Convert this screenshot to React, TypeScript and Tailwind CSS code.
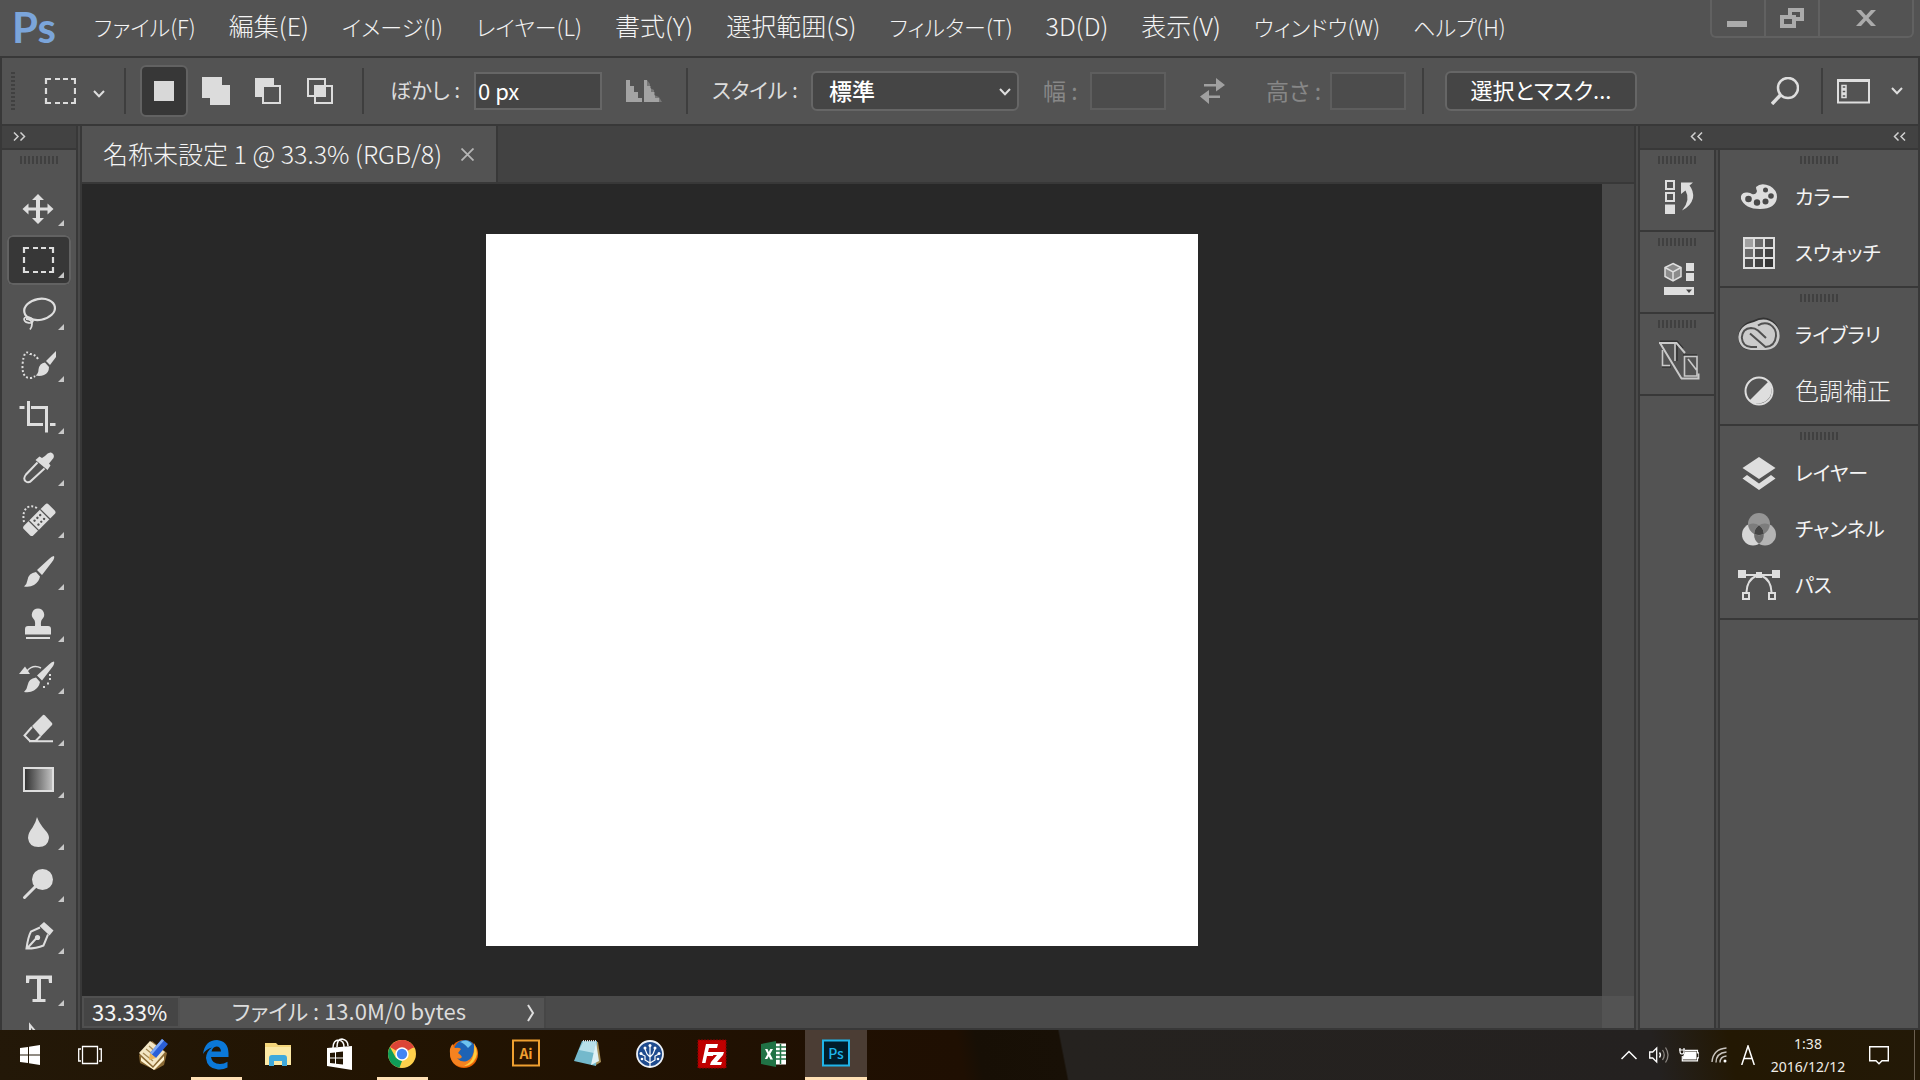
import type { ReactNode } from "react";

const UI =
  "font-['Noto_Sans_CJK_JP','Noto_Sans',sans-serif] [font-feature-settings:'palt']";

type Menu = { label: string; kana?: boolean };

const menus: Menu[] = [
  { label: "ファイル(F)", kana: true },
  { label: "編集(E)" },
  { label: "イメージ(I)", kana: true },
  { label: "レイヤー(L)", kana: true },
  { label: "書式(Y)" },
  { label: "選択範囲(S)" },
  { label: "フィルター(T)", kana: true },
  { label: "3D(D)" },
  { label: "表示(V)" },
  { label: "ウィンドウ(W)", kana: true },
  { label: "ヘルプ(H)", kana: true },
];

const BRUSH = (
  <>
    <path d="M31 0 Q32 2 29 6 L19 19 L14 14 L26 3 Q29 0 31 0Z" />
    <path d="M13 16 L17 20.500 Q16 26 11 29 Q7 31.500 1 30.500 Q4 28 4.500 24 Q5.500 17 13 16Z" />
  </>
);

type Tool = { name: string; kana?: boolean; art: ReactNode };

const tools: Tool[] = [
  {
    name: "移動",
    art: (
      <path d="M15 2l6 6h-4v7.500h7.500V11.500l6 5.500-6 5.500V18.500H17V26h4l-6 6-6-6h4v-7.500H5.500v4L-.5 17l6-5.500v4H13V8H9z" />
    ),
  },
  {
    name: "長方形選択",
    art: (
      <path
        d="M1 9V4h5M10 4h5M18 4h5M26 4h4v5M30 13v6M30 23v5h-4M23 28h-5M15 28h-5M6 28H1v-5M1 19v-6"
        fill="none"
        stroke="currentColor"
        strokeWidth="2.200"
      />
    ),
  },
  {
    name: "なげなわ",
    art: (
      <g fill="none" stroke="currentColor" strokeWidth="2.200">
        <ellipse cx="16.500" cy="13.500" rx="15.500" ry="10.500" transform="rotate(-10 16 13)" />
        <ellipse cx="5.500" cy="24" rx="4.500" ry="2.800" transform="rotate(15 5.500 24)" strokeWidth="1.800" />
        <path d="M3 23q6 0 6 5q0 3-2 5.500" strokeWidth="1.800" />
      </g>
    ),
  },
  {
    name: "クイック選択",
    art: (
      <>
        <path
          d="M15 11Q12 6 7 6Q1-0-.5 17Q-1 30 7 30Q10 30 12 28"
          fill="none"
          stroke="currentColor"
          strokeWidth="2"
          strokeDasharray="2 2"
        />
        <path d="M33 3v6l-6 8-4-4z" />
        <path d="M22 14.500l4 4.500q0 6-5 8-4 1.500-8.500.500 3-2 3-6 1-6.500 6.500-7z" />
      </>
    ),
  },
  {
    name: "切り抜き",
    art: (
      <g fill="none" stroke="currentColor" strokeWidth="3">
        <path d="M-3.500 7.500H1.500M5.500 1v23.500H20M8 7.500h15.500v25M27 24.500h5.500" />
      </g>
    ),
  },
  {
    name: "スポイト",
    art: (
      <>
        <path d="M22 4q3-4 6-3.500Q32 2 30.500 6L26 11.500l1.500 2-3 4.500L12.500 8l4-3.500 2.500 1.500z" />
        <path
          d="M14.500 10.500L3 22.500Q-.5 27 3 29.500Q6 31.500 9 28L21.500 16.500"
          fill="none"
          stroke="currentColor"
          strokeWidth="2"
        />
      </>
    ),
  },
  {
    name: "スポット修復ブラシ",
    art: (
      <>
        <path
          d="M14 4Q9 1 4 3.500Q-1 8 1 18"
          fill="none"
          stroke="currentColor"
          strokeWidth="2"
          strokeDasharray="2 2"
        />
        <g transform="rotate(-45 16.500 16)">
          <rect x="-1" y="9" width="35" height="13.500" rx="2.500" />
          <path d="M8.500 9v14M24.500 9v14" stroke="#535353" strokeWidth="1.300" />
          <g fill="#535353">
            <circle cx="12.500" cy="13" r="1.200" />
            <circle cx="16.500" cy="13" r="1.200" />
            <circle cx="20.500" cy="13" r="1.200" />
            <circle cx="12.500" cy="18.500" r="1.200" />
            <circle cx="16.500" cy="18.500" r="1.200" />
            <circle cx="20.500" cy="18.500" r="1.200" />
          </g>
        </g>
      </>
    ),
  },
  { name: "ブラシ", art: BRUSH },
  {
    name: "コピースタンプ",
    art: (
      <path d="M15 .5a6.200 6.200 0 0 1 4 10.900Q17.500 13 18 18h7q3 0 3 3v5.500H2V21q0-3 3-3h7q.5-5-1-6.600A6.200 6.200 0 0 1 15 .5zM3 29h24v2H3z" />
    ),
  },
  {
    name: "ヒストリーブラシ",
    art: (
      <>
        <g transform="translate(0 1.500)">{BRUSH}</g>
        <path d="M2 6.500l5 7.500H-4z" />
        <path d="M4 11Q10 4 18 8" fill="none" stroke="currentColor" strokeWidth="1.600" />
        <path d="M26 14h2v2h-2zM26 18h2v2h-2zM24 22.500h2v2h-2zM20 26h2v2h-2z" />
      </>
    ),
  },
  {
    name: "消しゴム",
    art: (
      <>
        <path d="M20 3q1-.5 2 .5l7 7.500q.8 1 0 2L18 24.500 9 14z" />
        <path
          d="M9 15L1.500 23.500L7 29h5.500l5-5M6 29.200h24"
          fill="none"
          stroke="currentColor"
          strokeWidth="2"
        />
      </>
    ),
  },
  {
    name: "グラデーション",
    art: (
      <>
        <defs>
          <linearGradient id="toolGradient">
            <stop offset="0" stopColor="#2e2e2e" />
            <stop offset="1" stopColor="#c4c4c4" />
          </linearGradient>
        </defs>
        <rect x="1" y="4" width="29" height="23" fill="url(#toolGradient)" stroke="currentColor" strokeWidth="2" />
      </>
    ),
  },
  {
    name: "ぼかし",
    art: <path d="M14 1Q16 7 22 14Q26 18 26 22Q25 31 15.500 31Q6 31 5 22Q5 17 9.500 11.500Q13 6 14 1Z" />,
  },
  {
    name: "覆い焼き",
    art: (
      <>
        <circle cx="19.500" cy="11.500" r="10.500" />
        <path d="M13 18L1.500 29.500" stroke="currentColor" strokeWidth="3" strokeLinecap="round" />
      </>
    ),
  },
  {
    name: "ペン",
    art: (
      <>
        <path d="M21 2l9.500 8.500-4 5L16.500 6z" />
        <path
          d="M17 7.500L8 11.500Q5 17 3.500 28.500Q14 28.500 20.500 25.500L25 14.500M4 28.500L13.500 18"
          fill="none"
          stroke="currentColor"
          strokeWidth="2"
        />
        <circle cx="14.500" cy="17.500" r="2.600" />
      </>
    ),
  },
  {
    name: "横書き文字",
    art: <path d="M3 3.500h26v7.500h-3l-.5-4H18v20h4.500v3h-13v-3H14V7H6.500L6 11H3z" />,
  },
  {
    name: "パス選択",
    art: <path d="M7 1v24l6-6h9z" fill="none" stroke="currentColor" strokeWidth="2" />,
  },
];

function Grip() {
  return (
    <div className="mx-auto mt-1.5 h-2 w-[38px] shrink-0 bg-[repeating-linear-gradient(90deg,#404040_0_2px,transparent_2px_4px)]" />
  );
}

function Divider() {
  return <div className="w-1.5 shrink-0 border-x-2 border-[#383838] bg-[#4a4a4a]" />;
}

function Sep() {
  return <div className="h-[46px] w-0.5 shrink-0 bg-[#3e3e3e]" />;
}

function Chevron() {
  return (
    <svg className="h-2 w-3 shrink-0" viewBox="0 0 12 8" fill="none" stroke="#dedede" strokeWidth="2">
      <path d="M1 1l5 5.200L11 1" />
    </svg>
  );
}

function DoubleChevron({ flip }: { flip?: boolean }) {
  return (
    <svg
      className="h-[9px] w-[13px]"
      viewBox="0 0 13 9"
      fill="none"
      stroke="#d0d0d0"
      strokeWidth="1.500"
    >
      <path d={flip ? "M1 .5l4 4-4 4M7.500 .5l4 4-4 4" : "M5.500 .5l-4 4 4 4M12 .5l-4 4 4 4"} />
    </svg>
  );
}

function TitleBar() {
  return (
    <header className="flex h-14 shrink-0 items-center bg-[#535353]">
      <div className="ml-3 w-[82px] pb-0.5 font-['Lato',sans-serif] text-[42px] leading-[50px] font-bold text-[#7ba5da]">
        Ps
      </div>
      <nav className="flex items-baseline gap-[33px] pb-1.5">
        {menus.map((m) => (
          <button
            key={m.label}
            className={
              m.kana
                ? "text-[22px] leading-8 font-light whitespace-nowrap text-[#f4f4f4]"
                : "text-[25px] leading-8 font-light whitespace-nowrap text-[#f4f4f4]"
            }
          >
            {m.label}
          </button>
        ))}
      </nav>
      <div className="mr-1.5 ml-auto flex h-[38px] self-start rounded-b-md border-2 border-t-0 border-[#616161]">
        <button aria-label="最小化" className="flex w-[54px] items-center justify-center border-r-2 border-[#616161] text-[#ababab]">
          <svg className="h-6 w-6" viewBox="0 0 24 24" fill="currentColor">
            <path d="M1 15h20v6H1z" />
          </svg>
        </button>
        <button aria-label="元に戻す" className="flex w-[54px] items-center justify-center border-r-2 border-[#616161] text-[#ababab]">
          <svg className="h-6 w-6" viewBox="0 0 24 24" fill="none" stroke="currentColor" strokeWidth="4">
            <path d="M10 9V4h12v9h-6M2 11h12v9H2z" />
          </svg>
        </button>
        <button aria-label="閉じる" className="flex w-[92px] items-center justify-center text-[#ababab]">
          <svg className="h-6 w-6" viewBox="0 0 24 24" fill="currentColor">
            <path d="M2 4h5l5 5.500L17 4h5l-7.500 8L22 20h-5l-5-5.500L7 20H2l7.500-8z" />
          </svg>
        </button>
      </div>
    </header>
  );
}

function OptionsBar() {
  return (
    <section className="flex h-[70px] shrink-0 items-center border-2 border-[#383838] bg-[#535353] text-[21px] text-[#dcdcdc]">
      <div className="ml-[9px] h-[38px] w-1 shrink-0 bg-[repeating-linear-gradient(180deg,#404040_0_2px,transparent_2px_4px)]" />
      <button aria-label="ツールプリセット" className="ml-[29px] flex w-16 shrink-0 items-center justify-between">
        <svg className="h-7 w-8" viewBox="0 0 32 28" fill="none" stroke="currentColor" strokeWidth="2.200">
          <path d="M2 7V2h5M11 2h5M19 2h5M27 2h4v5M31 11v6M31 21v5h-4M24 26h-5M16 26h-5M7 26H2v-5M2 17v-6" />
        </svg>
        <div className="pt-1.5 pr-[3px]">
          <Chevron />
        </div>
      </button>
      <div className="ml-4">
        <Sep />
      </div>
      <div className="ml-3.5 flex shrink-0 gap-1">
        <button aria-label="新規選択" className="flex h-[52px] w-12 items-center justify-center rounded-md border-2 border-[#626262] bg-[#373737]">
          <div className="h-5 w-5 bg-[#d8d8d8]" />
        </button>
        <button aria-label="選択範囲に追加" className="flex h-[52px] w-12 items-center justify-center">
          <svg className="h-7 w-7" viewBox="0 0 28 28" fill="currentColor">
            <path d="M0 0h20v8h8v20H8v-7H0z" />
          </svg>
        </button>
        <button aria-label="一部削除" className="flex h-[52px] w-12 items-center justify-center">
          <svg className="h-7 w-7" viewBox="0 0 28 28" fill="currentColor">
            <path d="M1 1h19v7H8v12H1z" />
            <path d="M9 9h17v17H9z" fill="none" stroke="currentColor" strokeWidth="2" />
          </svg>
        </button>
        <button aria-label="共通範囲" className="flex h-[52px] w-12 items-center justify-center">
          <svg className="h-7 w-7" viewBox="0 0 28 28" fill="none" stroke="currentColor" strokeWidth="2">
            <path d="M2 2h17v17H2z" />
            <path d="M9 9h17v17H9z" />
            <path d="M9 9h10v10H9z" fill="currentColor" />
          </svg>
        </button>
      </div>
      <div className="ml-[18px]">
        <Sep />
      </div>
      <label htmlFor="feather" className="ml-[26px] w-[84px] shrink-0 pb-0.5 whitespace-nowrap">
        ぼかし :
      </label>
      <input
        id="feather"
        defaultValue="0 px"
        className="h-[38px] w-32 min-w-0 border-2 border-[#666] bg-[#454545] px-0.5 pb-0.5 text-[22px] text-white outline-none"
      />
      <svg className="ml-6 h-6 w-9 shrink-0" viewBox="0 0 36 24" aria-hidden="true">
        <path d="M0 1h4v6h4v6h4v6h4v4H0z" fill="#a3a3a3" />
        <path d="M18 1h3v6h4v6h4v6h4v4H18z" fill="#a3a3a3" />
        <path d="M21 1l3 4v4l4 2v5l5 2 3 5h-3v-4h-4v-6h-4V7h-4z" fill="#777" />
      </svg>
      <div className="ml-6">
        <Sep />
      </div>
      <label htmlFor="style" className="ml-6 w-[99px] shrink-0 pb-0.5 whitespace-nowrap">
        スタイル :
      </label>
      <div className="relative w-52 shrink-0">
        <select
          id="style"
          className="h-10 w-full appearance-none rounded-md border-2 border-[#666] bg-[#454545] pb-0.5 pl-4 text-[23px] font-medium text-white outline-none"
        >
          <option>標準</option>
        </select>
        <div className="pointer-events-none absolute top-[17px] right-2">
          <Chevron />
        </div>
      </div>
      <label htmlFor="w" className="ml-6 w-[47px] shrink-0 pb-0.5 text-[23px] whitespace-nowrap text-[#878787]">
        幅 :
      </label>
      <input id="w" disabled className="h-[38px] w-[76px] min-w-0 border-2 border-[#5e5e5e] bg-[#4c4c4c]" />
      <button aria-label="幅と高さを入れ替え" className="ml-8 shrink-0 text-[#a0a0a0]">
        <svg className="h-7 w-7" viewBox="0 0 28 28" fill="currentColor">
          <path d="M6 7h12V1l9 7-9 6.500V9.500H6zM22 18.500v2.500H11v6l-9-7.500L11 13v5.500z" />
        </svg>
      </button>
      <label htmlFor="h" className="ml-10 w-16 shrink-0 pb-0.5 text-[23px] whitespace-nowrap text-[#878787]">
        高さ :
      </label>
      <input id="h" disabled className="h-[38px] w-[76px] min-w-0 border-2 border-[#5e5e5e] bg-[#4c4c4c]" />
      <div className="ml-4">
        <Sep />
      </div>
      <button className="ml-[21px] h-10 w-48 shrink-0 rounded-md border-2 border-[#666] bg-[#454545] pb-1 text-[22px] leading-8 whitespace-nowrap text-white">
        選択とマスク...
      </button>
      <button aria-label="検索" className="ml-auto">
        <svg className="h-7 w-7" viewBox="0 0 28 28" fill="none" stroke="#dedede" strokeWidth="2.500">
          <circle cx="17" cy="11" r="10" />
          <path d="M9.500 18L1 27" strokeWidth="3.500" />
        </svg>
      </button>
      <div className="ml-[22px]">
        <Sep />
      </div>
      <button aria-label="ワークスペース" className="mr-[15px] ml-3.5 flex items-center gap-[21px]">
        <svg className="h-7 w-[33px]" viewBox="0 0 33 28" fill="none" stroke="#dedede" strokeWidth="2">
          <path d="M1 3h31v22.500H1z" />
          <path d="M0 3.500h33" strokeWidth="3" />
          <path d="M5 8.500h4v3H5zM5 13h4v3H5zM5 17.500h4v3H5z" strokeWidth="1.500" />
        </svg>
        <Chevron />
      </button>
    </section>
  );
}

function Toolbox() {
  return (
    <aside className="flex w-[74px] shrink-0 flex-col overflow-hidden bg-[#535353]">
      <div className="flex h-6 shrink-0 items-center border-b-2 border-[#383838] bg-[#424242] pb-0.5 pl-[11px]">
        <button aria-label="パネルを展開">
          <DoubleChevron flip />
        </button>
      </div>
      <Grip />
      <div className="mt-[18px] flex flex-col">
        {tools.map((t, i) => (
          <div key={t.name} className="flex h-[52px] shrink-0 justify-center py-px">
            <button
              aria-label={t.name}
              className={
                i === 1
                  ? "relative flex h-[50px] w-16 items-center justify-center rounded-md bg-[#373737] text-[#dedede] inset-ring-2 inset-ring-[#626262]"
                  : "relative flex h-[50px] w-16 items-center justify-center text-[#dedede]"
              }
            >
              <svg className="h-8 w-8 overflow-visible" viewBox="0 0 32 32" fill="currentColor">
                {t.art}
              </svg>
              <svg className="absolute right-[7px] bottom-[7px] h-1.5 w-1.5" viewBox="0 0 6 6" fill="#c8c8c8">
                <path d="M6 0v6H0z" />
              </svg>
            </button>
          </div>
        ))}
      </div>
    </aside>
  );
}

function Document() {
  return (
    <main className="flex min-w-0 flex-1 flex-col border-b-2 border-[#383838]">
      <div className="flex h-[58px] shrink-0 border-b-2 border-[#383838] bg-[#424242]">
        <div className="flex items-center border-r-2 border-[#383838] bg-[#535353] pr-[22px] pl-[21px]">
          <span className="w-[342px] pb-0.5 text-[25px] leading-8 font-light whitespace-nowrap text-[#f4f4f4]">
            名称未設定 1 @ 33.3% (RGB/8)
          </span>
          <button aria-label="タブを閉じる" className="ml-4">
            <svg className="h-[13px] w-[13px]" viewBox="0 0 13 13" stroke="#b5b5b5" strokeWidth="1.800">
              <path d="M.5 .5l12 12M12.500 .5l-12 12" />
            </svg>
          </button>
        </div>
      </div>
      <div className="flex min-h-0 flex-1">
        <div className="flex flex-1 items-center justify-center bg-[#282828]">
          <div className="aspect-square w-[712px] bg-white" />
        </div>
        <div className="w-8 bg-[#4a4a4a]" />
      </div>
      <div className="flex h-8 shrink-0 bg-[#4a4a4a]">
        <div className="flex w-[98px] items-center border-2 border-[#505050] bg-[#454545]">
          <input
            aria-label="ズーム"
            defaultValue="33.33%"
            className="h-7 w-full bg-transparent pb-0.5 pl-2 text-[22px] text-[#f4f4f4] outline-none"
          />
        </div>
        <div className="flex w-[366px] items-center justify-between border-t-2 border-r-2 border-[#464646] bg-[#535353] pr-[9px] pl-[52px] text-[22px] text-[#dcdcdc]">
          <span className="pb-1.5 leading-7 whitespace-nowrap">ファイル : 13.0M/0 bytes</span>
          <svg className="h-[18px] w-2" viewBox="0 0 8 18" fill="none" stroke="#dedede" strokeWidth="2">
            <path d="M1 1l5 8-5 8" />
          </svg>
        </div>
        <div className="ml-auto w-8 bg-[#535353]" />
      </div>
    </main>
  );
}

const dockIcons: Tool[] = [
  {
    name: "ヒストリー",
    art: (
      <>
        <path d="M7 4h8v8H7zM7 16h8v8H7z" fill="none" stroke="currentColor" strokeWidth="2" />
        <path d="M6 27.500h10V37H6z" />
        <path d="M22 17V5.500h12L30.500 8.500Q35 14 34 21Q32 29 23 33.500Q32 23 26.500 13.500z" />
      </>
    ),
  },
  {
    name: "プロパティ",
    art: (
      <>
        <path d="M14 4.500l8 4v9l-8 4.500-8-4.500v-9z" fill="#8b8b8b" stroke="currentColor" strokeWidth="1.500" />
        <path d="M6 8.500l8 4.500 8-4.500M14 13v9" fill="none" stroke="currentColor" strokeWidth="1.500" />
        <path d="M27 4h8v8h-8zM27 14h8v8h-8z" />
        <path d="M5 28h30v8H5z" />
        <path d="M27 30.500h6l-3 3.500z" fill="#444" />
      </>
    ),
  },
  {
    name: "3D",
    art: (
      <g fill="none">
        <path d="M1 .3h17l6 7M18 3v17M24 14h14M3 26h9" stroke="#333" strokeWidth="1.600" />
        <g stroke="#c9c9c9" strokeWidth="2">
          <path d="M0 2h17.500L26 12M1 2l21.500 35.500M22 37.500h17.500v-5" />
          <path d="M3.500 9v15.500H11M16 3v17M25.500 15.500h12.500v19.500H25.500zM29 18l8.500 11" strokeWidth="1.600" />
        </g>
      </g>
    ),
  },
];

const groups: Tool[][] = [
  [
    {
      name: "カラー",
      kana: true,
      art: (
        <>
          <path d="M18 5Q23-.0 32 4Q39 8 39 15Q38 27 22 27Q7 27 3 17Q2 11 8 10.500Q12 10 14 12Q18 13 19 9Q18 7 18 5Z" />
          <g fill="#4a4a4a">
            <circle cx="10.500" cy="17" r="3.300" />
            <circle cx="19" cy="20.500" r="3.200" />
            <circle cx="27.500" cy="19.500" r="3" />
            <circle cx="33" cy="14" r="2.800" />
            <circle cx="27.500" cy="8" r="2.500" />
          </g>
        </>
      ),
    },
    {
      name: "スウォッチ",
      kana: true,
      art: (
        <>
          <path d="M5-1h32v32H5z" />
          <path d="M7 1h8v8H7z" fill="#a0a0a0" />
          <path d="M17 1h8v8h-8zM7 11h8v8H7z" fill="#6a6a6a" />
          <path d="M27 1h8v8h-8zM17 11h8v8h-8zM7 21h8v8H7z" fill="#4c4c4c" />
          <path d="M27 11h8v8h-8zM17 21h8v8h-8z" fill="#404040" />
          <path d="M27 21h8v8h-8z" fill="#333" />
        </>
      ),
    },
  ],
  [
    {
      name: "ライブラリ",
      kana: true,
      art: (
        <>
          <path d="M15 .5Q29-7 38 4Q43 11 41 20Q37 30 28 30H13Q1 30 0 17Q1 4 15 .5Z" fill="#333" />
          <path d="M16 2Q28-4 37 4.500Q42.500 10 41.500 18Q39 30 27 30H13Q1 29 .3 17Q1.500 5 16 2Z" fill="#cbcbcb" />
          <path
            d="M20 5.500Q26 1.500 32 4.500Q38.500 8.500 38 16Q37 26.500 27.500 27L12 13.500M19 27H13Q4.500 26.500 3.800 17.500Q4.500 8.500 13 8Q17 8 20 10.500L28 18"
            fill="none"
            stroke="#505050"
            strokeWidth="2"
          />
        </>
      ),
    },
    {
      name: "色調補正",
      art: (
        <>
          <circle cx="21" cy="15" r="13.500" fill="none" stroke="currentColor" strokeWidth="2" />
          <path d="M30.500 5.500A13.500 13.500 0 0 1 11.500 24.500z" />
        </>
      ),
    },
  ],
  [
    {
      name: "レイヤー",
      kana: true,
      art: (
        <>
          <path d="M21-1l16.500 11L21 21 4.500 10z" />
          <path d="M9 17l12 8.500L33 17l4.500 3.500L21 32 4.500 20.500z" />
        </>
      ),
    },
    {
      name: "チャンネル",
      kana: true,
      art: (
        <>
          <circle cx="15" cy="20.500" r="11" fill="#d6d6d6" />
          <circle cx="27" cy="20.500" r="11" fill="#b4b4b4" />
          <circle cx="21" cy="10" r="11" fill="#959595" />
          <path d="M21 11.300a11 11 0 0 1 4.800 8.600 11 11 0 0 1-9.600 0A11 11 0 0 1 21 11.300z" fill="#444" />
          <path d="M16.200 20a11 11 0 0 0 4.800 9.700A11 11 0 0 0 25.800 20a11 11 0 0 1-9.600 0z" fill="#6e6e6e" />
          <path d="M10.500 10.800Q16 8 21 11.300Q16.500 14 16.200 20Q10.500 16 10.500 10.800zM31.500 10.800Q26 8 21 11.300Q25.500 14 25.800 20Q31.500 16 31.500 10.800z" fill="#7c7c7c" />
        </>
      ),
    },
    {
      name: "パス",
      kana: true,
      art: (
        <>
          <path d="M0 0h8v8H0zM34 0h8v8h-8zM18 2h6v6h-6z" />
          <path d="M4 5h34M18 6Q9 10 8.500 22M24 6Q33 10 33.500 22M5 23h6v6H5zM31 23h6v6h-6z" fill="none" stroke="currentColor" strokeWidth="2" />
        </>
      ),
    },
  ],
];

function Dock() {
  return (
    <aside className="flex w-[280px] shrink-0 flex-col border-r-2 border-b-2 border-[#383838] bg-[#535353]">
      <div className="flex h-6 shrink-0 items-center justify-between border-b-2 border-[#383838] bg-[#424242] pr-3 pb-0.5 pl-[50px]">
        <button aria-label="アイコンパネルを展開">
          <DoubleChevron />
        </button>
        <button aria-label="パネルを展開">
          <DoubleChevron />
        </button>
      </div>
      <div className="flex min-h-0 flex-1">
        <div className="w-[74px] shrink-0">
          {dockIcons.map((d) => (
            <div key={d.name} className="flex h-[82px] flex-col items-center border-b-2 border-[#383838]">
              <Grip />
              <button aria-label={d.name} className="mt-[13px] pl-1 text-[#dedede]">
                <svg className="h-10 w-10 overflow-visible" viewBox="0 0 40 40" fill="currentColor">
                  {d.art}
                </svg>
              </button>
            </div>
          ))}
        </div>
        <Divider />
        <div className="min-w-0 flex-1">
          {groups.map((g) => (
            <section key={g[0].name} className="flex flex-col border-b-2 border-[#383838] pb-[5px]">
              <Grip />
              <div className="mt-[5px]">
                {g.map((p) => (
                  <button key={p.name} className="flex h-14 w-full items-center gap-[15px] pl-[18px] text-[#dedede]">
                    <svg className="h-[30px] w-[42px] shrink-0 overflow-visible" viewBox="0 0 42 30" fill="currentColor">
                      {p.art}
                    </svg>
                    <span
                      className={
                        p.kana
                          ? "text-[20px] leading-8 whitespace-nowrap text-[#f4f4f4]"
                          : "pb-0.5 text-[24px] leading-8 font-light whitespace-nowrap text-[#f4f4f4]"
                      }
                    >
                      {p.name}
                    </span>
                  </button>
                ))}
              </div>
            </section>
          ))}
        </div>
      </div>
    </aside>
  );
}

type AppEntry = { name: string; state?: "open" | "active"; art: ReactNode };

const apps: AppEntry[] = [
  {
    name: "メモ",
    art: (
      <>
        <path d="M1 17L14 3l15 12-3 12-9 5L2 25z" fill="#8a6a35" />
        <path d="M1 15L12 3l15 11-12 14z" fill="#f3e6c4" />
        <path d="M5 15l10 8M8 11l10 8M11 8l9 8" stroke="#a58a55" strokeWidth="1.300" />
        <path d="M3 19l12 11 11-12v4L16 32 3 23z" fill="#fff3d0" />
        <path d="M24 1l6 5-12 14-6-5z" fill="#2a5fd8" />
        <path d="M24 1l2 1.500-12 14-2-1.500z" fill="#7da8f5" />
        <path d="M12 15l6 5-7 2z" fill="#e9b45c" />
      </>
    ),
  },
  {
    name: "Edge",
    state: "open",
    art: (
      <path
        d="M3 16Q5 2 17 2Q28 3 28.500 15V19H11Q12 26 20 26Q24 26 27.500 23.800V29.500Q23 32 18 31.500Q7 30.500 6 20Q6.500 13 12 9.500Q6 11 3 16ZM11.500 13.500H21Q20.500 8.500 16.500 8.500Q12.500 9 11.500 13.500Z"
        fill="#0b78d8"
      />
    ),
  },
  {
    name: "エクスプローラー",
    art: (
      <>
        <path d="M3 5h11l2 2h13v20H3z" fill="#f5d67b" />
        <path d="M3 9h26v18H3z" fill="#fce9a5" />
        <path d="M7 28v-8q0-3 3-3h12q3 0 3 3v8h-5v-5h-8v5z" fill="#3fa9dc" />
      </>
    ),
  },
  {
    name: "ストア",
    art: (
      <>
        <path d="M3 10l25-2v24L3 28z" fill="#fff" />
        <path d="M9 10Q9 2 15 2Q20 3 20 9M13 9Q13 1 18 1Q24 2 24 8" fill="none" stroke="#fff" strokeWidth="1.500" />
        <path d="M6 15l5-.5v5H6zM12 14.300l7-.8v6h-7zM6 20.500h5v5L6 25zM12 20.500h7v6l-7-.8z" fill="#231604" />
      </>
    ),
  },
  {
    name: "Chrome",
    state: "open",
    art: (
      <>
        <circle cx="16" cy="16" r="14" fill="#ffd04b" />
        <path d="M16 16L3.900 9A14 14 0 0 1 28.100 9z" fill="#db4437" />
        <path d="M16 2a14 14 0 0 1 12.100 7.500H16z" fill="#db4437" />
        <path d="M3.900 9L10 20l6 3-2.500 6.800A14 14 0 0 1 3.900 9z" fill="#0f9d58" />
        <circle cx="16" cy="16" r="6.700" fill="#fff" />
        <circle cx="16" cy="16" r="5.200" fill="#4285f4" />
      </>
    ),
  },
  {
    name: "Firefox",
    art: (
      <>
        <circle cx="16" cy="16" r="14" fill="#e66000" />
        <circle cx="17" cy="13" r="11" fill="#1e63b5" />
        <path d="M12 4q7-4 12 2l-4 4q-4-5-8-6z" fill="#6ec3ee" />
        <path d="M26 5q7 10 0 19Q18 32 8 27Q1 22 2 11q1-4 3-5 0 3 2 4 4-1 6 1l-3 4q3 2 4 4-2 3-5 1 4 5 10 3 8-3 7-18z" fill="#f58220" />
        <path d="M26 6q6 10-1 18-4 4-9 4 8-4 9-10 2-5 1-12z" fill="#ffcb3d" />
      </>
    ),
  },
  {
    name: "Illustrator",
    art: (
      <>
        <rect x="3" y="2.500" width="26" height="25" fill="#2a1500" stroke="#f0a030" strokeWidth="2" />
        <text x="16" y="20.500" textAnchor="middle" fontSize="14" fontWeight="700" fill="#f0a030">
          Ai
        </text>
      </>
    ),
  },
  {
    name: "メモ帳",
    art: (
      <>
        <path d="M10 3l16 1 3 20-5 3z" fill="#a58d55" />
        <path d="M10 3h15l-1 25-22-5z" fill="#74b9cc" />
        <path d="M11 4h13l-2 11-15-3z" fill="#b8e0ea" />
        <path d="M24 4l3 19-8 4z" fill="#dff1f5" />
        <path d="M11 3h14" stroke="#d8d8d8" strokeWidth="2" strokeDasharray="1 1" />
      </>
    ),
  },
  {
    name: "SourceTree",
    art: (
      <>
        <circle cx="16" cy="16" r="13" fill="#1f4b8e" stroke="#eef2f8" strokeWidth="1.800" />
        <path
          d="M16 29V8M16 25l-5-3v-4l-4-2M16 25l5-3v-4l4-2M16 19l-3-3-2-5M16 19l3-3 2-5"
          fill="none"
          stroke="#fff"
          strokeWidth="1.200"
        />
        <g fill="#fff">
          <circle cx="16" cy="7.500" r="1.500" />
          <circle cx="11" cy="10" r="1.500" />
          <circle cx="21" cy="10" r="1.500" />
          <circle cx="7" cy="15.500" r="1.500" />
          <circle cx="25" cy="15.500" r="1.500" />
          <circle cx="8" cy="21" r="1.300" />
          <circle cx="24" cy="21" r="1.300" />
        </g>
      </>
    ),
  },
  {
    name: "FileZilla",
    art: (
      <>
        <rect x="2" y="2" width="28" height="28" fill="#bf0000" stroke="#8e0000" strokeDasharray="2 1" />
        <path d="M6 25L10 6h12l-1 4h-8l-1 4h6l-1 4h-6l-1.500 7zM17 14h11l-1 3-6 7h5l-1 3H14l1-3 6-7h-5z" fill="#fff" />
      </>
    ),
  },
  {
    name: "Excel",
    art: (
      <>
        <path d="M16 5.500h12v21H16z" fill="#fff" />
        <path d="M17 9h11M17 13h11M17 17h11M17 21h11M22.500 6v20" stroke="#207245" strokeWidth="1.500" />
        <path d="M3 6l15-3v26L3 26z" fill="#207245" />
        <path d="M7 11h2.500l1.300 3 1.500-3H15l-2.800 5 2.800 5.500h-2.700l-1.500-3.300L9.300 21H6.800l2.700-5z" fill="#fff" />
      </>
    ),
  },
  {
    name: "Photoshop",
    state: "active",
    art: (
      <>
        <rect x="3" y="2.500" width="26" height="25" fill="#001d2b" stroke="#1fb5ea" strokeWidth="2" />
        <text x="16" y="20.500" textAnchor="middle" fontSize="14" fontWeight="500" fill="#1fb5ea">
          Ps
        </text>
      </>
    ),
  },
];

function Taskbar() {
  return (
    <footer className="flex h-[50px] shrink-0 items-stretch bg-[linear-gradient(79deg,#231808_0%,#221402_20%,#1f0f02_50%,#170f05_51%,#181006_55.300%,#25221f_55.400%,#242120_86%,#231803_90%,#231907_100%)] text-white">
      <button aria-label="スタート" className="flex w-[60px] items-center justify-center">
        <svg className="h-5 w-5" viewBox="0 0 20 20" fill="#fff">
          <path d="M0 3l8-1v7.500H0zM9 1.800L20 0v9.500H9zM0 10.500h8V18l-8-1zM9 10.500h11V20L9 18.200z" />
        </svg>
      </button>
      <button aria-label="タスクビュー" className="flex w-[60px] items-center justify-center">
        <svg className="h-5 w-6" viewBox="0 0 24 20" fill="none" stroke="#fff" strokeWidth="1.300">
          <path d="M4.500 1.500h15v17h-15zM3 4H.7v12H3M21 4h2.300v12H21" />
        </svg>
      </button>
      <div className="ml-[3px] flex">
        {apps.map((a) => (
          <button
            key={a.name}
            aria-label={a.name}
            className={
              a.state === "active"
                ? "flex w-[62px] flex-col items-center justify-between bg-[#4b3d34] pt-2"
                : "flex w-[62px] flex-col items-center justify-between pt-2"
            }
          >
            <svg className="h-8 w-8" viewBox="0 0 32 32">
              {a.art}
            </svg>
            {a.state === "open" && <div className="h-[3px] w-[51px] bg-[#ffe0b4]" />}
            {a.state === "active" && <div className="h-[3px] w-full bg-[#ffe0b4]" />}
          </button>
        ))}
      </div>
      <div className="ml-auto flex items-center">
        <button aria-label="隠れているインジケーター" className="mr-3">
          <svg className="h-2.5 w-4" viewBox="0 0 16 10" fill="none" stroke="#fff" strokeWidth="1.500">
            <path d="M.5 9L8 1.500 15.500 9" />
          </svg>
        </button>
        <button aria-label="音量" className="mr-2.5">
          <svg className="h-5 w-5" viewBox="0 0 20 20" fill="none" stroke="#fff" strokeWidth="1.300">
            <path d="M.7 7h3l4-4v14l-4-4h-3z" />
            <path d="M10.500 7.500q2 2.500 0 5" />
            <path d="M13.500 5q3.500 5 0 10M16.500 2.500q5 7.500 0 15" stroke="#8a8580" />
          </svg>
        </button>
        <button aria-label="バッテリー" className="mr-3">
          <svg className="h-4 w-5" viewBox="0 0 20 16" fill="#fff">
            <path d="M6 4.500h11.500v8H4v-3z" />
            <path d="M6 3.300h12.500v2.500H20v5h-1.500v3H3.300V9M1 1v3.500q0 2.500 2 2.500t2-2.500V1M0 3h6" fill="none" stroke="#fff" strokeWidth="1.200" />
          </svg>
        </button>
        <button aria-label="ネットワーク" className="mr-3.5">
          <svg className="h-4 w-4" viewBox="0 0 16 16" fill="none" stroke="#fff" strokeWidth="1.400">
            <path d="M1 15Q2 2 15.500 1M5 15.500Q5 6 15.500 5M9 15.500Q9 9.500 15.500 9" stroke="#c9c4be" />
            <circle cx="14" cy="14" r="1.500" fill="#fff" stroke="none" />
          </svg>
        </button>
        <button aria-label="入力モード" className="mr-[15px]">
          <svg className="h-5 w-3.5" viewBox="0 0 14 20" fill="none" stroke="#fff" strokeWidth="1.500">
            <path d="M.7 20L7 1l6.300 19M3 13.500h8" />
          </svg>
        </button>
        <time className="w-[76px] text-center font-['Noto_Sans',sans-serif] text-[14px] leading-[23px] whitespace-nowrap text-[#f0ece6]">
          1:38
          <br />
          2016/12/12
        </time>
        <button aria-label="アクションセンター" className="mr-[25px] ml-[23px]">
          <svg className="h-5 w-5" viewBox="0 0 20 20" fill="none" stroke="#fff" strokeWidth="1.400">
            <path d="M.7 1.700h18.600v14H13l-3 3-3-3H.7z" />
          </svg>
        </button>
        <div className="mr-[5px] h-[50px] w-px bg-[#6b5f50]" />
      </div>
    </footer>
  );
}

export default function App() {
  return (
    <div className={`flex h-screen flex-col overflow-hidden bg-[#383838] ${UI}`}>
      <TitleBar />
      <OptionsBar />
      <div className="flex min-h-0 flex-1">
        <div className="w-0.5 shrink-0" />
        <Toolbox />
        <Divider />
        <Document />
        <Divider />
        <Dock />
      </div>
      <Taskbar />
    </div>
  );
}
